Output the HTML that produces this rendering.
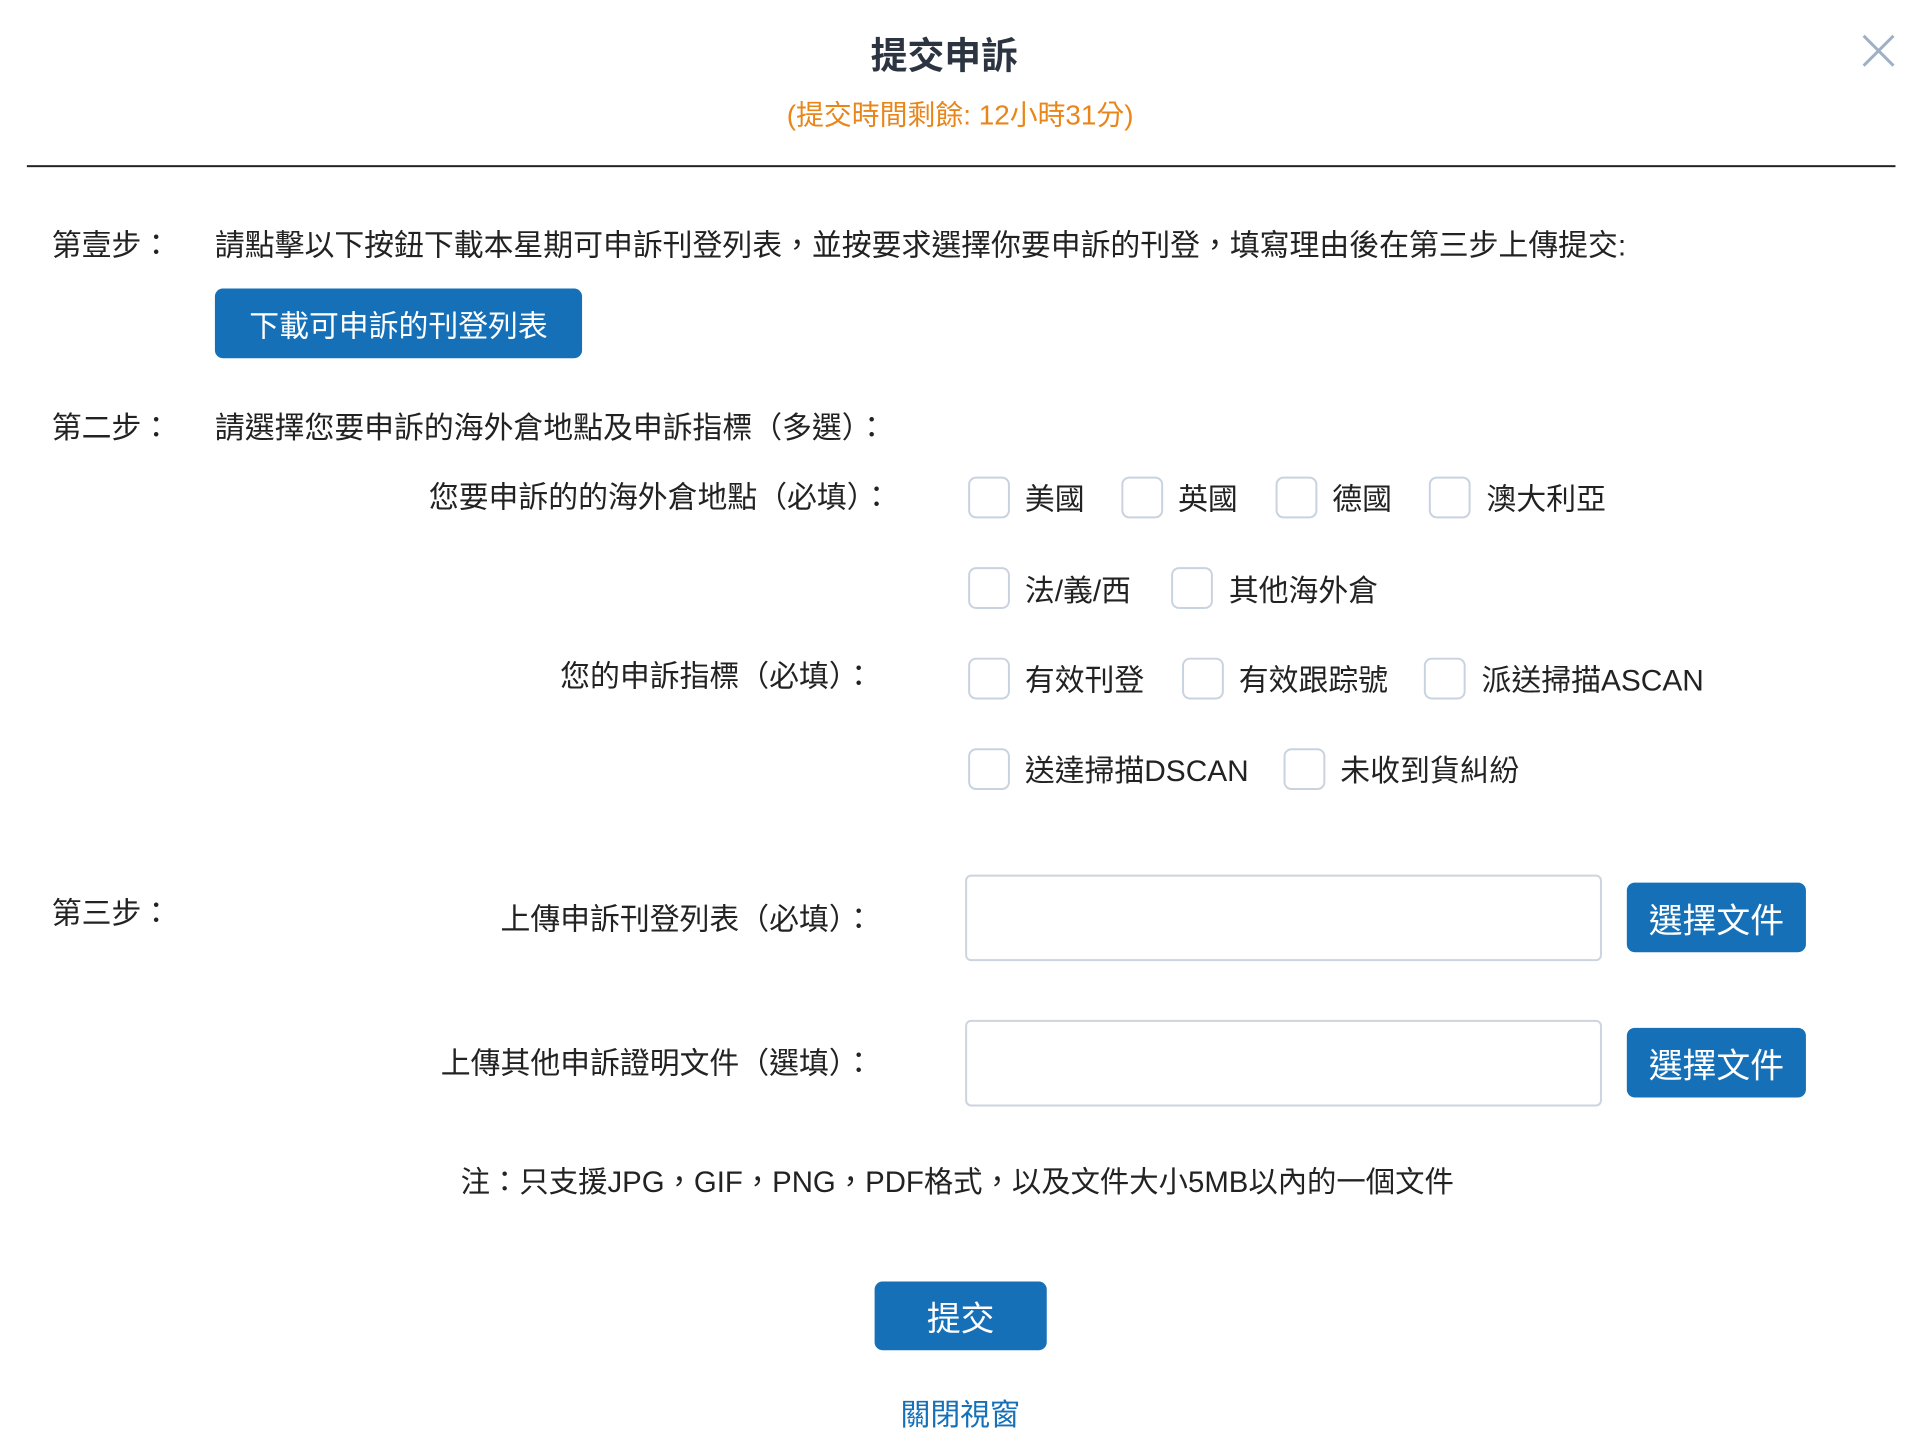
<!DOCTYPE html>
<html><head><meta charset="utf-8"><style>
body{margin:0;width:1928px;height:1442px;background:#fff;position:relative;overflow:hidden;font-family:"Liberation Sans","Noto Sans CJK TC",sans-serif;color:#222}
#w{position:absolute;left:0;top:0;width:1938px;height:1450px;transform:scale(0.995);transform-origin:0 0}
.a{position:absolute;white-space:nowrap;line-height:1}
.cb{position:absolute;width:42px;height:42px;border:2px solid #c9d3e0;border-radius:8px;box-sizing:border-box}
.btn{position:absolute;background:#1670b8;color:#fff;border-radius:8px;display:flex;align-items:center;justify-content:center;white-space:nowrap}
.inp{position:absolute;border:2px solid #ccd4de;border-radius:6px;box-sizing:border-box}
.t{font-size:30px}
.a.t{margin-top:2px}
.r{text-align:right}
</style></head><body><div id="w">
<div class="a" style="left:0;width:1898px;text-align:center;top:38px;font-size:37px;font-weight:bold;color:#2b3440">提交申訴</div>
<div class="a" style="left:0;width:1930px;text-align:center;top:102px;font-size:28px;color:#e8861a">(提交時間剩餘: 12小時31分)</div>
<svg class="a" style="left:1870px;top:33px" width="36" height="36" viewBox="0 0 36 36"><path d="M3 3L33 33M33 3L3 33" stroke="#9fb0c4" stroke-width="3"/></svg>
<div class="a" style="left:27px;width:1878px;top:166px;height:2px;background:#222"></div>

<div class="a t" style="left:52px;top:231px">第壹步：</div>
<div class="a t" style="left:216px;top:231px">請點擊以下按鈕下載本星期可申訴刊登列表，並按要求選擇你要申訴的刊登，填寫理由後在第三步上傳提交:</div>
<div class="btn t" style="left:216px;top:290px;width:369px;height:70px">下載可申訴的刊登列表</div>

<div class="a t" style="left:52px;top:414px">第二步：</div>
<div class="a t" style="left:216px;top:414px">請選擇您要申訴的海外倉地點及申訴指標（多選）：</div>
<div class="a t r" style="left:300px;width:596px;top:484px">您要申訴的的海外倉地點（必填）：</div>

<div class="cb" style="left:973px;top:479px"></div><div class="a t" style="left:1030px;top:486px">美國</div>
<div class="cb" style="left:1127px;top:479px"></div><div class="a t" style="left:1184px;top:486px">英國</div>
<div class="cb" style="left:1282px;top:479px"></div><div class="a t" style="left:1339px;top:486px">德國</div>
<div class="cb" style="left:1436px;top:479px"></div><div class="a t" style="left:1494px;top:486px">澳大利亞</div>

<div class="cb" style="left:973px;top:570px"></div><div class="a t" style="left:1030px;top:578px">法/義/西</div>
<div class="cb" style="left:1177px;top:570px"></div><div class="a t" style="left:1235px;top:578px">其他海外倉</div>

<div class="a t r" style="left:300px;width:578px;top:664px">您的申訴指標（必填）：</div>
<div class="cb" style="left:973px;top:661px"></div><div class="a t" style="left:1030px;top:668px">有效刊登</div>
<div class="cb" style="left:1188px;top:661px"></div><div class="a t" style="left:1245px;top:668px">有效跟踪號</div>
<div class="cb" style="left:1431px;top:661px"></div><div class="a t" style="left:1489px;top:668px">派送掃描ASCAN</div>

<div class="cb" style="left:973px;top:752px"></div><div class="a t" style="left:1030px;top:759px">送達掃描DSCAN</div>
<div class="cb" style="left:1290px;top:752px"></div><div class="a t" style="left:1347px;top:759px">未收到貨糾紛</div>

<div class="a t" style="left:52px;top:902px">第三步：</div>
<div class="a t r" style="left:300px;width:578px;top:908px">上傳申訴刊登列表（必填）：</div>
<div class="inp" style="left:970px;top:879px;width:640px;height:87px"></div>
<div class="btn" style="left:1635px;top:887px;width:180px;height:70px;font-size:34px">選擇文件</div>

<div class="a t r" style="left:300px;width:578px;top:1053px">上傳其他申訴證明文件（選填）：</div>
<div class="inp" style="left:970px;top:1025px;width:640px;height:87px"></div>
<div class="btn" style="left:1635px;top:1033px;width:180px;height:70px;font-size:34px">選擇文件</div>

<div class="a t" style="left:463px;top:1172px;font-size:29.5px">注：只支援JPG，GIF，PNG，PDF格式，以及文件大小5MB以內的一個文件</div>

<div class="btn" style="left:879px;top:1288px;width:173px;height:69px;font-size:34px">提交</div>
<div class="a t" style="left:0;width:1930px;text-align:center;top:1406px;color:#1670b8">關閉視窗</div>
</div></body></html>
